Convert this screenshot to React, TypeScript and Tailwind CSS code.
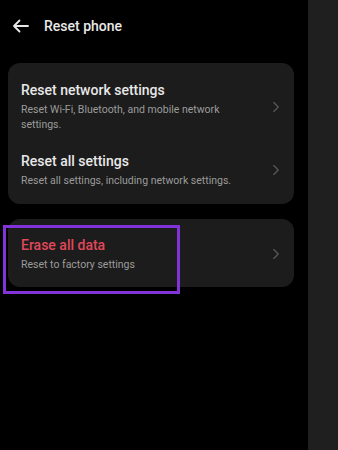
import { ChevronRight } from "lucide-react";

function Row({
  title,
  subtitle,
  danger,
  className,
}: {
  title: string;
  subtitle: string;
  danger?: boolean;
  className: string;
}) {
  return (
    <div className={`flex items-center pl-[13px] pr-[9px] ${className}`}>
      <div className="flex-1 pr-6">
        <div
          className={`text-[14px] font-medium leading-[18px] ${
            danger ? "text-[#e0485a]" : "text-[#e8e8e8]"
          }`}
        >
          {title}
        </div>
        <div className="mt-[3px] text-[10.5px] leading-[15px] text-[#9b9b9b]">{subtitle}</div>
      </div>
      <ChevronRight className="h-[18px] w-[18px] text-[#5c5c5c]" strokeWidth={1.5} />
    </div>
  );
}

export default function App() {
  return (
    <div
      className="flex h-[450px] w-[338px] overflow-hidden bg-black"
      style={{ fontFamily: "Roboto, 'Noto Sans', sans-serif" }}
    >
      <div className="w-[308px] pl-[8px] pr-[14px]">
        <div className="flex h-[63px] items-start pt-[17px]">
          <div className="flex h-[18px] items-center pl-[4px]">
            <svg width="17" height="14" viewBox="0 0 17 14" fill="none">
              <path
                d="M16 7H2M7.5 1.5L2 7l5.5 5.5"
                stroke="#e8e8e8"
                strokeWidth="1.8"
                strokeLinecap="round"
                strokeLinejoin="round"
              />
            </svg>
          </div>
          <span className="ml-[15px] text-[14px] font-medium leading-[18px] text-[#e8e8e8]">
            Reset phone
          </span>
        </div>

        <div className="rounded-[12px] bg-[#1c1c1c]">
          <Row
            className="pt-[18px] pb-[10px]"
            title="Reset network settings"
            subtitle="Reset Wi-Fi, Bluetooth, and mobile network settings."
          />
          <Row
            className="pt-[10px] pb-[16px]"
            title="Reset all settings"
            subtitle="Reset all settings, including network settings."
          />
        </div>

        <div className="relative mt-[15px] rounded-[12px] bg-[#1c1c1c]">
          <Row
            className="pt-[17px] pb-[15px]"
            danger
            title="Erase all data"
            subtitle="Reset to factory settings"
          />
          <div className="absolute top-[6px] left-[-5px] h-[69px] w-[177px] border-[3px] border-[#8233d8]" />
        </div>
      </div>
      <div className="flex-1 bg-[#1f1f1f]" />
    </div>
  );
}
